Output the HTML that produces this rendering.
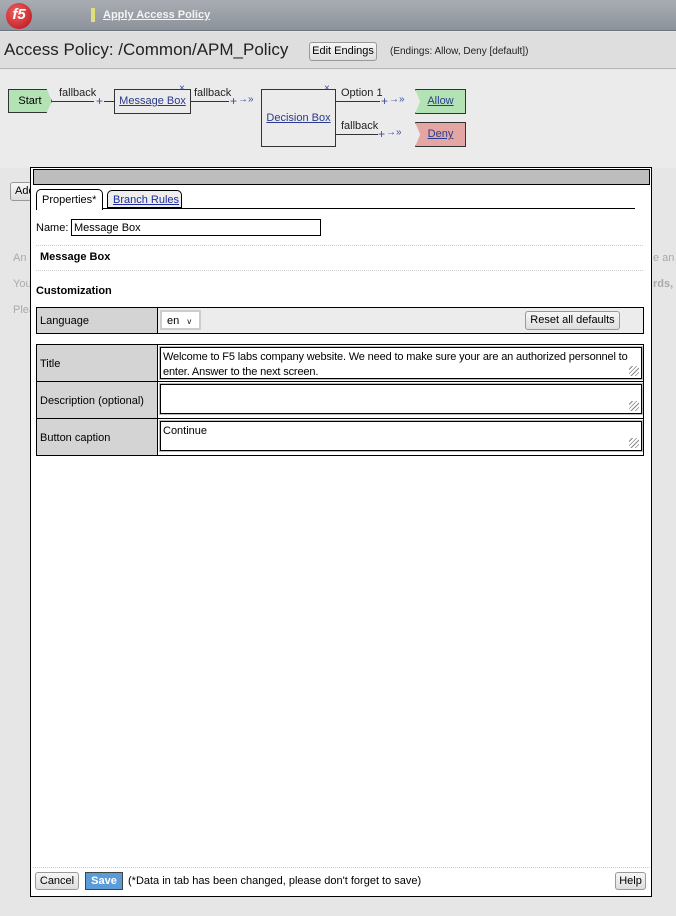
<!DOCTYPE html>
<html><head><meta charset="utf-8"><style>
*{box-sizing:border-box;margin:0;padding:0}
body{width:676px;height:916px;position:relative;background:#e6e6e6;font-family:"Liberation Sans",sans-serif;font-size:11px;color:#000;overflow:hidden}
.a{position:absolute}
u{color:#2b3a8c}
.btn{position:absolute;border:1px solid #999;border-radius:3px;background:linear-gradient(#f6f6f6,#dedede);font-size:11px;text-align:center}
.node{position:absolute;border:1px solid #333;text-align:center}
.line{position:absolute;height:1px;background:#333}
.lbl{position:absolute;font-size:11px;color:#222}
.plus{position:absolute;color:#3a4a9a;font-size:12px}
.cell{position:absolute;background:#d4d4d4;border-right:1px solid #000;padding-left:3px;font-size:11px}
.ta{position:absolute;background:#fff;border:1px solid #000;outline:1px solid #bbb;font-size:11px;padding:2px 2px;line-height:15px}
.grip{position:absolute;right:2px;bottom:2px;width:10px;height:10px;background:repeating-linear-gradient(135deg,transparent 0 2px,#888 2px 3px)}
</style></head><body>
<div class="a" style="left:0;top:0;width:676px;height:31px;background:linear-gradient(#a9adb3,#8d939b);border-bottom:1px solid #6f757c"></div>
<div class="a" style="left:6px;top:3px;width:26px;height:26px;border-radius:50%;background:radial-gradient(circle at 40% 35%,#f06060,#b3121a);color:#fff;font-weight:bold;font-size:15px;text-align:center;line-height:24px;font-style:italic">f5</div>
<div class="a" style="left:91px;top:8px;width:4px;height:14px;background:#e0e07a"></div>
<div class="a" style="left:103px;top:9px;color:#f4f4f4;font-weight:bold;font-size:11px;text-decoration:underline">Apply Access Policy</div>
<div class="a" style="left:0;top:32px;width:676px;height:37px;background:#dedede;border-bottom:1px solid #b8b8b8"></div>
<div class="a" style="left:4px;top:40px;font-size:17px;color:#222">Access Policy: /Common/APM_Policy</div>
<div class="btn" style="left:309px;top:42px;width:68px;height:19px;line-height:17px">Edit Endings</div>
<div class="a" style="left:390px;top:46px;font-size:10px;color:#222">(Endings: Allow, Deny [default])</div>
<div class="a" style="left:0;top:70px;width:676px;height:98px;background:#ebebeb"></div>
<div class="node" style="left:8px;top:89px;width:44px;height:24px;background:#b3e3b5;line-height:22px;clip-path:polygon(0 0,88% 0,100% 50%,88% 100%,0 100%)">Start</div>
<div class="line" style="left:52px;top:101px;width:42px"></div><div class="lbl" style="left:59px;top:87px">fallback</div>
<div class="plus" style="left:96px;top:94px">+</div><div class="line" style="left:104px;top:101px;width:10px"></div>
<div class="node" style="left:114px;top:89px;width:77px;height:25px;line-height:23px;background:#ebebeb"><u>Message Box</u></div>
<div class="a" style="left:179px;top:83px;font-size:10px;color:#3a4a9a">×</div>
<div class="line" style="left:191px;top:101px;width:38px"></div><div class="lbl" style="left:194px;top:87px">fallback</div>
<div class="plus" style="left:230px;top:94px">+</div><div class="a" style="left:238px;top:94px;color:#3a4a9a;font-size:10px">→»</div>
<div class="node" style="left:261px;top:89px;width:75px;height:58px;line-height:56px;background:#ebebeb"><u>Decision Box</u></div>
<div class="a" style="left:324px;top:83px;font-size:10px;color:#3a4a9a">×</div>
<div class="line" style="left:336px;top:101px;width:44px"></div><div class="lbl" style="left:341px;top:87px">Option 1</div>
<div class="plus" style="left:381px;top:94px">+</div><div class="a" style="left:389px;top:94px;color:#3a4a9a;font-size:10px">→»</div>
<div class="node" style="left:415px;top:89px;width:51px;height:25px;line-height:23px;background:#b3e3b5;clip-path:polygon(0 0,100% 0,100% 100%,0 100%,10% 50%)"><u>Allow</u></div>
<div class="line" style="left:336px;top:134px;width:42px"></div><div class="lbl" style="left:341px;top:120px">fallback</div>
<div class="plus" style="left:378px;top:127px">+</div><div class="a" style="left:386px;top:127px;color:#3a4a9a;font-size:10px">→»</div>
<div class="node" style="left:415px;top:122px;width:51px;height:25px;line-height:23px;background:#e3a6a2;clip-path:polygon(0 0,100% 0,100% 100%,0 100%,10% 50%)"><u>Deny</u></div>
<div class="btn" style="left:10px;top:182px;width:30px;height:19px;line-height:17px;text-align:left;padding-left:4px">Add</div>
<div class="a" style="left:13px;top:252px;color:#aaa">An</div><div class="a" style="left:13px;top:278px;color:#aaa">You</div><div class="a" style="left:13px;top:304px;color:#aaa">Plea</div>
<div class="a" style="left:653px;top:252px;color:#aaa">e an</div><div class="a" style="left:653px;top:278px;color:#aaa;font-weight:bold">rds,</div>

<div class="a" style="left:30px;top:167px;width:622px;height:730px;background:#fff;border:1px solid #000"></div>
<div class="a" style="left:33px;top:169px;width:617px;height:16px;background:#bdbdbd;border:1px solid #000"></div>
<div class="a" style="left:36px;top:189px;width:67px;height:21px;border:1px solid #000;border-bottom:none;border-radius:5px 5px 0 0;background:#fff;padding:4px 0 0 5px">Properties*</div>
<div class="a" style="left:107px;top:190px;width:75px;height:18px;border:1px solid #000;border-radius:5px 5px 0 0;background:#eee;padding:3px 0 0 5px"><u style="color:#1a2a9a">Branch Rules</u></div>
<div class="a" style="left:103px;top:208px;width:532px;height:1px;background:#000"></div>
<div class="a" style="left:36px;top:222px">Name:</div>
<div class="a" style="left:71px;top:219px;width:250px;height:17px;border:1px solid #000;padding:2px 2px">Message Box</div>
<div class="a" style="left:36px;top:245px;width:607px;border-top:1px dotted #ccc"></div>
<div class="a" style="left:40px;top:251px;font-weight:bold">Message Box</div>
<div class="a" style="left:36px;top:270px;width:607px;border-top:1px dotted #ccc"></div>
<div class="a" style="left:36px;top:285px;font-weight:bold">Customization</div>

<div class="a" style="left:36px;top:307px;width:608px;height:27px;border:1px solid #000;background:#ececec"></div>
<div class="cell" style="left:37px;top:308px;width:121px;height:25px;line-height:27px">Language</div>
<div class="a" style="left:160px;top:310px;width:41px;height:20px;border:2px solid #ccc;background:#fff;padding:3px 5px">en <span style="font-size:8px;margin-left:5px">v</span></div>
<div class="btn" style="left:525px;top:311px;width:95px;height:19px;line-height:17px">Reset all defaults</div>

<div class="a" style="left:36px;top:344px;width:608px;height:112px;border:1px solid #000;background:#fff"></div>
<div class="cell" style="left:37px;top:345px;width:121px;height:36px;line-height:38px">Title</div>
<div class="a" style="left:37px;top:381px;width:606px;height:1px;background:#000"></div>
<div class="cell" style="left:37px;top:382px;width:121px;height:36px;line-height:38px">Description (optional)</div>
<div class="a" style="left:37px;top:418px;width:606px;height:1px;background:#000"></div>
<div class="cell" style="left:37px;top:419px;width:121px;height:36px;line-height:38px">Button caption</div>
<div class="ta" style="left:160px;top:347px;width:482px;height:32px;letter-spacing:-0.15px;white-space:nowrap;overflow:hidden">Welcome to F5 labs company website. We need to make sure your are an authorized personnel to<br>enter. Answer to the next screen.<div class="grip"></div></div>
<div class="ta" style="left:160px;top:384px;width:482px;height:30px"><div class="grip"></div></div>
<div class="ta" style="left:160px;top:421px;width:482px;height:30px">Continue<div class="grip"></div></div>

<div class="a" style="left:33px;top:867px;width:617px;border-top:1px dotted #ccc"></div>
<div class="btn" style="left:35px;top:872px;width:44px;height:18px;line-height:16px">Cancel</div>
<div class="a" style="left:85px;top:872px;width:38px;height:18px;background:#5b9bd8;border:1px solid #444;color:#fff;font-weight:bold;text-align:center;line-height:16px">Save</div>
<div class="a" style="left:128px;top:875px">(*Data in tab has been changed, please don't forget to save)</div>
<div class="btn" style="left:615px;top:872px;width:31px;height:18px;line-height:16px">Help</div>
</body></html>
